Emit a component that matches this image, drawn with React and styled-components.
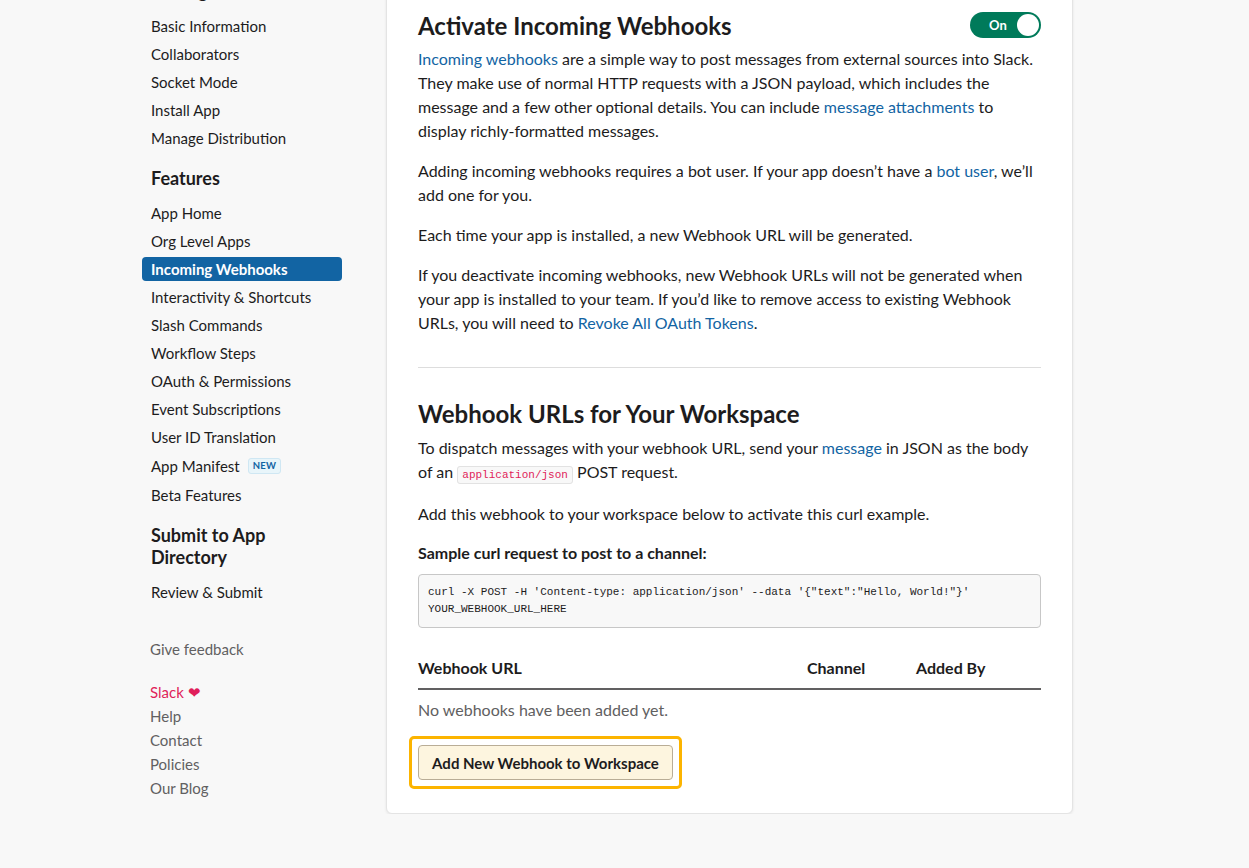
import React from 'react'
import styled, { createGlobalStyle } from 'styled-components'

const GlobalStyle = createGlobalStyle`
  html, body {
    margin: 0;
    padding: 0;
    background: #f8f8f8;
    font-family: Lato, 'Noto Sans', 'Liberation Sans', sans-serif;
    color: #1d1c1d;
    overflow: hidden;
  }
`

// Layout
const Page = styled.div`
  display: flex;
  align-items: flex-start;
  gap: 44px;
  padding-left: 142px;
  margin-top: -22px;
`

const Sidebar = styled.nav`
  width: 200px;
  padding-top: 2px;
  display: flex;
  flex-direction: column;
`

const NavHeading = styled.h3`
  margin: ${p => (p.$first ? '0' : '15px')} 0 10px;
  padding: 0 9px;
  font-size: 18px;
  line-height: 22px;
  font-weight: 700;
  color: #1d1c1d;
`

const NavItem = styled.a`
  display: flex;
  align-items: center;
  height: ${p => (p.$tall ? '30px' : '28px')};
  padding: 0 9px;
  font-size: 15px;
  color: ${p => (p.$active ? '#fff' : '#1d1c1d')};
  font-weight: ${p => (p.$active ? 700 : 400)};
  text-decoration: none;
  ${p =>
    p.$active &&
    `
    background: #1264a3;
    border-radius: 4px;
    height: 24px;
    margin: 2px 0;
  `}
`

const Badge = styled.span`
  margin-left: 8px;
  padding: 1px 4px;
  font-size: 9.5px;
  font-weight: 700;
  letter-spacing: 0.3px;
  line-height: 12px;
  color: #1264a3;
  background: #e8f5fa;
  border: 1px solid #cfe7f3;
  border-radius: 3px;
`

const FooterLinks = styled.div`
  display: flex;
  flex-direction: column;
  padding: 0 8px;
  margin-top: 31px;
`

const FooterLink = styled.a`
  font-size: 15px;
  line-height: 24px;
  color: ${p => (p.$brand ? '#e01e5a' : '#616061')};
  text-decoration: none;
  margin-top: ${p => p.$gap || 0}px;
`

// Panel
const Panel = styled.section`
  width: 623px;
  padding: 32px 31px 33px;
  background: #fff;
  border: 1px solid #e4e4e4;
  border-radius: 6px;
  box-shadow: 0 1px 3px rgba(0, 0, 0, 0.08);
`

const HeaderRow = styled.div`
  display: flex;
  align-items: center;
  justify-content: space-between;
`

const Title = styled.h2`
  margin: 0;
  font-size: 24px;
  line-height: 30px;
  font-weight: 700;
`

const Toggle = styled.button`
  display: flex;
  align-items: center;
  justify-content: space-between;
  width: 71px;
  height: 26px;
  padding: 0 2px 0 19px;
  margin-top: -2px;
  border: none;
  border-radius: 13px;
  background: #007a5a;
  color: #fff;
  font-family: inherit;
  font-weight: 700;
  font-size: 13px;
`

const Knob = styled.span`
  width: 22px;
  height: 22px;
  border-radius: 50%;
  background: #fff;
`

const Text = styled.p`
  margin: ${p => p.$top || 0}px 0 ${p => (p.$bottom ?? 16)}px;
  font-size: 16px;
  line-height: 24px;
  color: ${p => (p.$muted ? '#616061' : '#1d1c1d')};
  font-weight: ${p => (p.$bold ? 700 : 400)};
`

const Link = styled.a`
  color: #1264a3;
  text-decoration: none;
`

const Divider = styled.hr`
  margin: 32px 0 31px;
  border: none;
  border-top: 1px solid #dddddd;
`

const InlineCode = styled.code`
  padding: 2px 4px;
  font-family: 'Liberation Mono', 'DejaVu Sans Mono', monospace;
  font-size: 11px;
  color: #e01e5a;
  background: #f8f8f8;
  border: 1px solid #e2e2e2;
  border-radius: 3px;
`

const CodeBlock = styled.pre`
  margin: 9px 0 0;
  padding: 9px 9px;
  font-family: 'Liberation Mono', 'DejaVu Sans Mono', monospace;
  font-size: 11px;
  line-height: 17px;
  color: #1d1c1d;
  background: #f8f8f8;
  border: 1px solid #c7c7c7;
  border-radius: 4px;
  white-space: pre-wrap;
`

const Table = styled.table`
  width: 100%;
  margin-top: 20px;
  border-collapse: collapse;
`

const Th = styled.th`
  width: ${p => p.$w}px;
  padding: 8px 0 8px;
  text-align: left;
  font-size: 16px;
  line-height: 24px;
  font-weight: 700;
  border-bottom: 2px solid #616061;
`

const AddButton = styled.button`
  position: relative;
  margin-top: 23px;
  height: 35px;
  width: 255px;
  padding: 0;
  font-family: inherit;
  font-size: 15px;
  font-weight: 700;
  color: #1d1c1d;
  background: #fdf5df;
  border: 1px solid #b9ad96;
  border-radius: 4px;

  &::after {
    content: '';
    position: absolute;
    inset: -10px;
    border: 3px solid #fcb400;
    border-radius: 5px;
  }
`

const settings = [
  'Basic Information',
  'Collaborators',
  'Socket Mode',
  'Install App',
  'Manage Distribution',
]

const features = [
  'App Home',
  'Org Level Apps',
  'Incoming Webhooks',
  'Interactivity & Shortcuts',
  'Slash Commands',
  'Workflow Steps',
  'OAuth & Permissions',
  'Event Subscriptions',
  'User ID Translation',
]

const App = () => (
  <>
    <GlobalStyle />
    <Page>
      <Sidebar>
        <NavHeading $first>Settings</NavHeading>
        {settings.map(s => (
          <NavItem key={s}>{s}</NavItem>
        ))}
        <NavHeading>Features</NavHeading>
        {features.map(s => (
          <NavItem key={s} $active={s === 'Incoming Webhooks'}>
            {s}
          </NavItem>
        ))}
        <NavItem $tall>
          App Manifest <Badge>NEW</Badge>
        </NavItem>
        <NavItem>Beta Features</NavItem>
        <NavHeading>
          Submit to App
          <br />
          Directory
        </NavHeading>
        <NavItem>Review &amp; Submit</NavItem>
        <FooterLinks>
          <FooterLink>Give feedback</FooterLink>
          <FooterLink $brand $gap={19}>
            Slack ❤
          </FooterLink>
          <FooterLink>Help</FooterLink>
          <FooterLink>Contact</FooterLink>
          <FooterLink>Policies</FooterLink>
          <FooterLink>Our Blog</FooterLink>
        </FooterLinks>
      </Sidebar>

      <Panel>
        <HeaderRow>
          <Title>Activate Incoming Webhooks</Title>
          <Toggle>
            On <Knob />
          </Toggle>
        </HeaderRow>
        <Text $top={6}>
          <Link>Incoming webhooks</Link> are a simple way to post messages from
          external sources into Slack. They make use of normal HTTP requests
          with a JSON payload, which includes the message and a few other
          optional details. You can include <Link>message attachments</Link> to
          display richly-formatted messages.
        </Text>
        <Text>
          Adding incoming webhooks requires a bot user. If your app doesn’t have
          a <Link>bot user</Link>, we’ll add one for you.
        </Text>
        <Text>Each time your app is installed, a new Webhook URL will be generated.</Text>
        <Text $bottom={0}>
          If you deactivate incoming webhooks, new Webhook URLs will not be
          generated when your app is installed to your team. If you’d like to
          remove access to existing Webhook URLs, you will need to{' '}
          <Link>Revoke All OAuth Tokens</Link>.
        </Text>

        <Divider />

        <Title>Webhook URLs for Your Workspace</Title>
        <Text $top={7} $bottom={15}>
          To dispatch messages with your webhook URL, send your{' '}
          <Link>message</Link> in JSON as the body of an{' '}
          <InlineCode>application/json</InlineCode> POST request.
        </Text>
        <Text $bottom={15}>
          Add this webhook to your workspace below to activate this curl example.
        </Text>
        <Text $bold $bottom={0}>
          Sample curl request to post to a channel:
        </Text>
        <CodeBlock>
          {`curl -X POST -H 'Content-type: application/json' --data '{"text":"Hello, World!"}'\nYOUR_WEBHOOK_URL_HERE`}
        </CodeBlock>

        <Table>
          <thead>
            <tr>
              <Th $w={389}>Webhook URL</Th>
              <Th $w={109}>Channel</Th>
              <Th $w={125}>Added By</Th>
            </tr>
          </thead>
        </Table>
        <Text $muted $top={8} $bottom={0}>
          No webhooks have been added yet.
        </Text>
        <AddButton>Add New Webhook to Workspace</AddButton>
      </Panel>
    </Page>
  </>
)

export default App
